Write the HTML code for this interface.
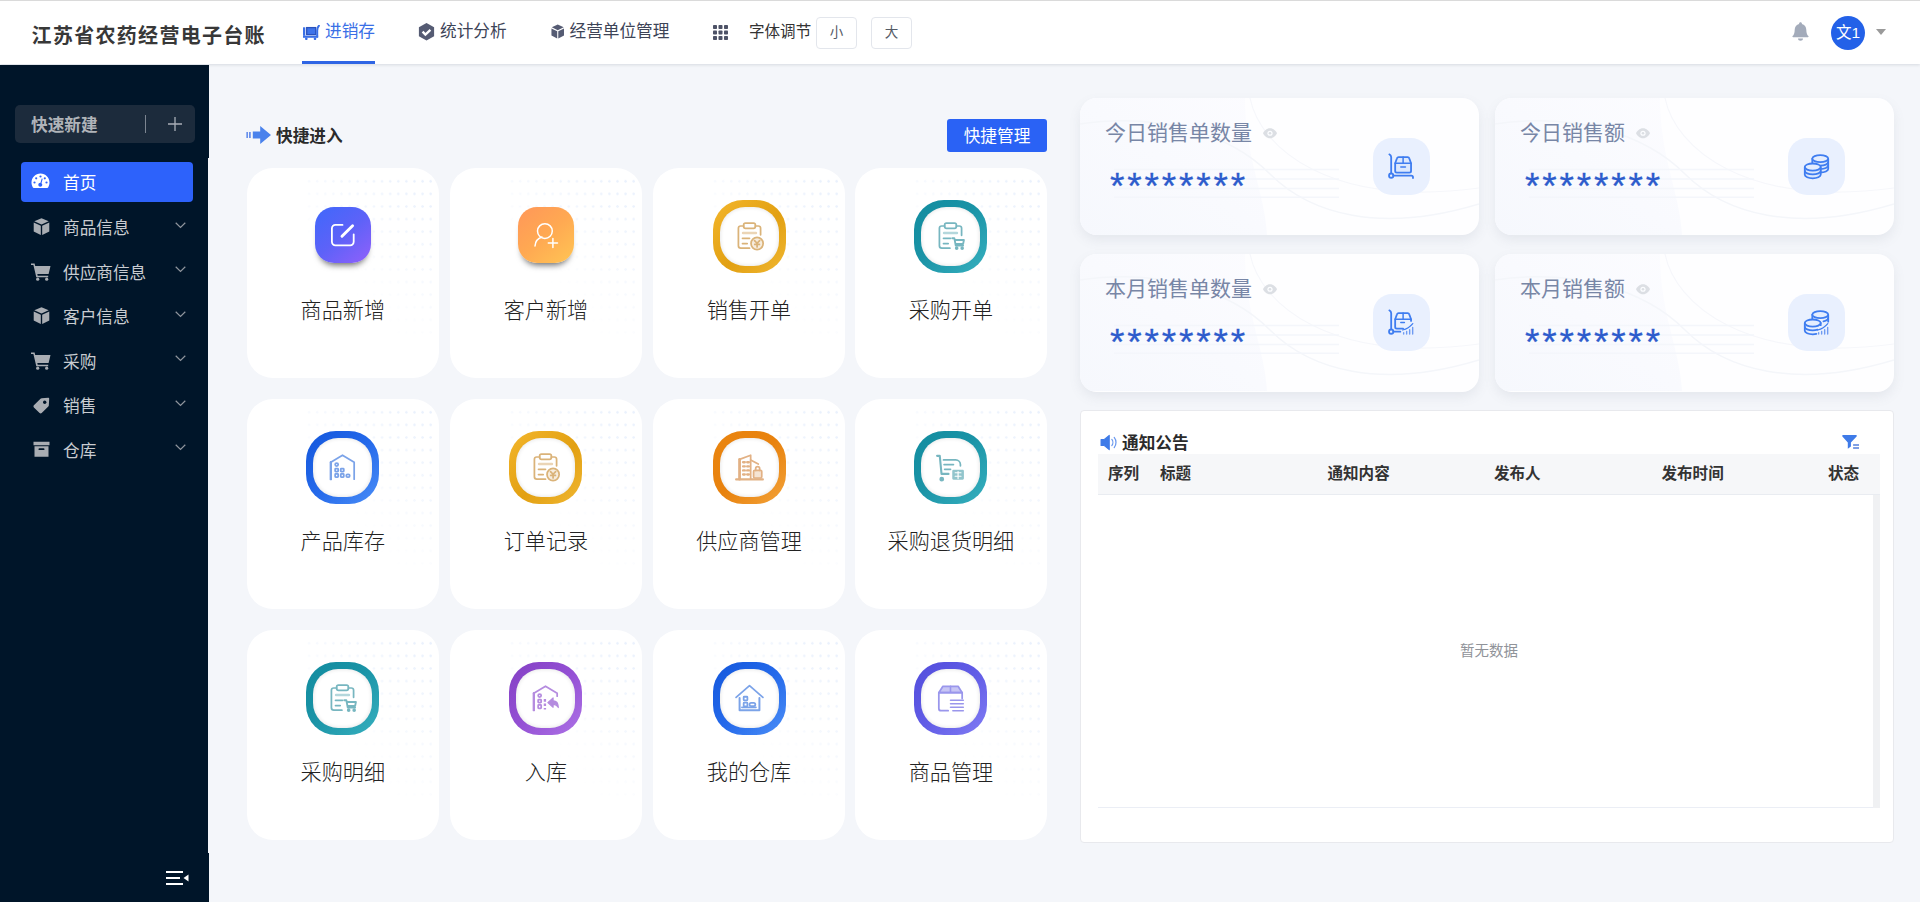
<!DOCTYPE html>
<html lang="zh-CN">
<head>
<meta charset="utf-8">
<title>江苏省农药经营电子台账</title>
<style>
*{box-sizing:border-box;margin:0;padding:0}
html,body{width:1920px;height:902px;overflow:hidden}
body{font-family:"Liberation Sans","Noto Sans CJK SC",sans-serif;background:#f4f6fa;color:#303133;position:relative}
.abs{position:absolute}
/* header */
#hd{position:absolute;left:0;top:0;width:1920px;height:64px;background:#fff;border-top:1px solid #dadada;box-shadow:0 1px 3px rgba(0,21,41,.12);z-index:5}
#logo{position:absolute;left:31.6px;top:19.8px;font-size:20px;line-height:30px;font-weight:700;letter-spacing:1.3px;color:#383838;white-space:nowrap}
.nav{position:absolute;top:0;height:64px;font-size:16.67px;line-height:24px;color:#3d4457;white-space:nowrap}
.nav span{position:absolute;top:18.7px}
.nav svg{position:absolute}
.nav.on{color:#3a6fe6}
#ul{position:absolute;left:302px;top:60px;width:73px;height:3px;background:#2f65e4}
.fbtn{position:absolute;top:16px;width:41px;height:32px;border:1px solid #e3e6ec;border-radius:4px;font-size:13.5px;line-height:30px;text-align:center;color:#555b66;background:#fff}
/* sidebar */
#sb{position:absolute;left:0;top:65px;width:208px;height:837px;background:#001529}
#qc{position:absolute;left:15px;top:40px;width:180px;height:38px;border-radius:5px;background:#1c2b3c}
#qc b{position:absolute;left:16px;top:8.5px;font-size:16.67px;line-height:24px;color:#b0b4b9;font-weight:700}
#qc i{position:absolute;left:130px;top:10px;width:1px;height:18px;background:#7c8591}
.mi{position:absolute;left:21px;width:172px;height:40px;border-radius:4px;color:#c9ccd1;font-size:16.67px;line-height:24px}
.mi span{position:absolute;left:42px;top:9.4px;white-space:nowrap}
.mi svg.ic{position:absolute;left:10px;top:11px}
.mi svg.ar{position:absolute;left:154px;top:14px}
.mi.on{background:#2d62fb;color:#fff}
.mi.on span{top:10.2px}
/* shortcut cards */
.card{position:absolute;width:192px;height:210px;border-radius:26px;background:#fff;overflow:hidden}
.card .dots{position:absolute;left:57.9px;top:6.6px;width:130px;height:164px;
 background-image:radial-gradient(circle,#dce8fb .9px,rgba(220,232,251,0) 1.5px);background-size:8.12px 12.6px;
 -webkit-mask-image:linear-gradient(225deg,rgba(0,0,0,.7) 0%,rgba(0,0,0,.4) 30%,rgba(0,0,0,.1) 55%,rgba(0,0,0,0) 70%);mask-image:linear-gradient(225deg,rgba(0,0,0,.7) 0%,rgba(0,0,0,.4) 30%,rgba(0,0,0,.1) 55%,rgba(0,0,0,0) 70%)}
.card .lb{position:absolute;left:0;width:192px;top:127.2px;text-align:center;font-size:21.1px;line-height:32px;color:#222;font-weight:300;white-space:nowrap}
.sq{position:absolute;left:68px;top:39px;width:56px;height:56px;border-radius:19px;box-shadow:0 6px 6px -4px rgba(0,0,0,.6)}
.ring{position:absolute;left:59.5px;top:32px;width:73px;height:73px;border-radius:30px}
.ring:before{content:"";position:absolute;left:7px;top:7px;right:7px;bottom:7px;border-radius:25px;background:#fff;box-shadow:inset 0 0 4px rgba(0,0,0,.13)}
.ring svg{position:absolute;left:19px;top:19px;width:35px;height:35px}
/* stat cards */
.st{position:absolute;width:399px;height:137px;border-radius:17px;background:#fefeff;overflow:hidden;box-shadow:0 5px 12px rgba(110,118,140,.11)}
.st .t{position:absolute;left:25px;top:18.7px;font-size:21px;line-height:32px;color:#7886a6;white-space:nowrap}
.st .v{position:absolute;left:30px;-webkit-text-stroke:.3px #2d5ccc;top:64.5px;font-size:37px;line-height:48px;color:#2d5ccc;letter-spacing:2.85px;white-space:nowrap;font-family:"Liberation Sans",sans-serif}
.st .ib{position:absolute;left:293px;top:40px;width:57px;height:57px;border-radius:19px;background:#e9f0fe}
.st .ib svg{position:absolute;left:14px;top:14px;width:29px;height:29px}
/* notice */
#nt{position:absolute;left:1080px;top:410px;width:814px;height:433px;background:#fff;border:1px solid #e8e9ed;border-radius:4px}
#th{position:absolute;left:17px;top:42.5px;width:782px;height:41.5px;background:#f6f7f9;border-bottom:1px solid #e9ecf1}
#th b{position:absolute;top:8.5px;font-size:15.55px;line-height:24px;color:#333;font-weight:700;white-space:nowrap}
</style>
</head>
<body>
<!-- HEADER -->
<div id="hd">
  <div id="logo">江苏省农药经营电子台账</div>
  <div class="nav on" style="left:302px;width:73px">
    <svg style="left:.8px;top:23.8px" width="17" height="15" viewBox="0 0 17 15"><path d="M0 2.300h2.300v8.500H0z" fill="#3a6fe6"/><rect x="3.700" y="2.600" width="9" height="7" fill="#3f74ea" stroke="#2a52bc" stroke-width="1.300"/><path d="M0 10.700h15.200v2.100H0z" fill="#3a6fe6"/><path d="M14.200 11.500V5.500c0-2 .5-3.500 1.700-4.700" fill="none" stroke="#3a6fe6" stroke-width="2" stroke-linecap="round"/><circle cx="3.300" cy="13.800" r="1.300" fill="#3a6fe6"/><circle cx="12" cy="13.800" r="1.300" fill="#3a6fe6"/></svg>
    <span style="left:23px">进销存</span>
  </div>
  <div id="ul"></div>
  <div class="nav" style="left:418px;width:90px">
    <svg style="left:0;top:22px" width="17" height="18" viewBox="0 0 17 18"><path d="M8.5 0l7.6 4.2v9.1L8.5 17.6.9 13.3V4.2z" fill="#555b73"/><path d="M4.6 8.6l2.8 3 5-4.8" fill="none" stroke="#fff" stroke-width="2.3"/></svg>
    <span style="left:22px">统计分析</span>
  </div>
  <div class="nav" style="left:550px;width:121px">
    <svg style="left:.8px;top:22.800px" width="13.500" height="15.200" viewBox="0 0 15 16"><path d="M7.5 0l6.6 3.3-6.6 3.3L.9 3.3z" fill="#555b73"/><path d="M.5 4.5l6.4 3.2v8L.5 12.4zM14.5 4.5L8.1 7.7v8l6.4-3.3z" fill="#555b73"/></svg>
    <span style="left:19.5px">经营单位管理</span>
  </div>
  <svg class="abs" style="left:713px;top:24px" width="15" height="15" viewBox="0 0 15 15" fill="#4d5266"><rect x="0" y="0" width="4" height="4" rx=".8"/><rect x="5.5" y="0" width="4" height="4" rx=".8"/><rect x="11" y="0" width="4" height="4" rx=".8"/><rect x="0" y="5.5" width="4" height="4" rx=".8"/><rect x="5.5" y="5.5" width="4" height="4" rx=".8"/><rect x="11" y="5.5" width="4" height="4" rx=".8"/><rect x="0" y="11" width="4" height="4" rx=".8"/><rect x="5.5" y="11" width="4" height="4" rx=".8"/><rect x="11" y="11" width="4" height="4" rx=".8"/></svg>
  <div class="abs" style="left:749px;top:19px;font-size:15.55px;line-height:24px;color:#333;white-space:nowrap">字体调节</div>
  <div class="fbtn" style="left:816px">小</div>
  <div class="fbtn" style="left:871px">大</div>
  <svg class="abs" style="left:1792px;top:21px" width="17" height="19" viewBox="0 0 17 19"><path d="M8.5 0.3c.8 0 1.4.6 1.4 1.3v.5c2.6.6 4.4 2.8 4.4 5.6 0 3.500.9 5.200 2.1 6.400.4.400.1 1.200-.6 1.200H1.200c-.7 0-1-.8-.6-1.200 1.200-1.200 2.100-2.900 2.100-6.400 0-2.800 1.800-5 4.400-5.600v-.5c0-.7.600-1.300 1.400-1.300z" fill="#a3abba"/><path d="M6 16.400h5c0 1.300-1.100 2.300-2.500 2.300S6 17.700 6 16.400z" fill="#a3abba"/></svg>
  <div class="abs" style="left:1831px;top:15px;width:34px;height:34px;border-radius:50%;background:#2361e8;color:#fff;font-size:15.5px;line-height:33px;text-align:center;white-space:nowrap">文1</div>
  <svg class="abs" style="left:1876px;top:28px" width="10" height="6" viewBox="0 0 10 6"><path d="M0 0h10L5 6z" fill="#9a9a9a"/></svg>
</div>

<!-- SIDEBAR -->
<div id="sb">
  <div class="abs" style="left:208px;top:0;width:1px;height:93px;background:#001529"></div><div class="abs" style="left:208px;top:788px;width:1px;height:49px;background:#001529"></div>
  <div id="qc"><b>快速新建</b><i></i>
    <svg class="abs" style="left:153px;top:12px" width="14" height="14" viewBox="0 0 14 14"><path d="M7 0v14M0 7h14" stroke="#a9afb7" stroke-width="1.3"/></svg>
  </div>
  <div class="mi on" style="top:97px"><svg class="ic" width="19" height="16" viewBox="0 0 19 16"><path d="M9.500.5C4.500.5.500 4.500.500 9.500c0 1.800.500 3.500 1.400 4.900.2.300.5.500.9.500h13.400c.4 0 .7-.2.900-.5.900-1.400 1.400-3.100 1.400-4.900 0-5-4-9-9-9z" fill="#fff"/><g fill="#2d62fb"><circle cx="9.500" cy="3.500" r="1.100"/><circle cx="5.200" cy="5.300" r="1.100"/><circle cx="3.500" cy="9.500" r="1.100"/><circle cx="15.500" cy="9.500" r="1.100"/><circle cx="13.800" cy="5.300" r="1.100"/><path d="M10.700 5.500l1 .3-1.200 4.400c.5.400.8 1 .8 1.600 0 1.100-.9 2-2 2s-2-.9-2-2 .9-2 2-2h.2z"/></g></svg><span>首页</span></div>
  <div class="mi" style="top:142.9px"><svg class="ic" style="left:11.5px;top:10px" width="17" height="17.500" viewBox="0 0 17 18"><path d="M8.500.2l7.400 3.200-7.400 3.300L1.100 3.400z" fill="#a9adb3"/><path d="M.500 4.700l7.300 3.200v9.600L.500 14zM16.500 4.700L9.200 7.900v9.600l7.300-3.500z" fill="#a9adb3"/></svg><span>商品信息</span><svg class="ar" width="11" height="7" viewBox="0 0 11 7"><path d="M.7.800l4.800 4.700L10.300.800" fill="none" stroke="#8f959d" stroke-width="1.200"/></svg></div>
  <div class="mi" style="top:187.4px"><svg class="ic" style="left:10px;top:11px" width="20" height="18" viewBox="0 0 20 18"><path d="M0 .5h3.600l.6 2.400h15.300l-1.900 8.100H6.300l.4 1.700h10.500v1.600H5.300L2.400 2.100H0z" fill="#a9adb3"/><circle cx="6.700" cy="16.200" r="1.600" fill="#a9adb3"/><circle cx="15.700" cy="16.200" r="1.600" fill="#a9adb3"/></svg><span>供应商信息</span><svg class="ar" width="11" height="7" viewBox="0 0 11 7"><path d="M.7.800l4.800 4.700L10.300.800" fill="none" stroke="#8f959d" stroke-width="1.200"/></svg></div>
  <div class="mi" style="top:231.9px"><svg class="ic" style="left:11.5px;top:10px" width="17" height="17.500" viewBox="0 0 17 18"><path d="M8.500.2l7.400 3.200-7.400 3.300L1.100 3.400z" fill="#a9adb3"/><path d="M.500 4.700l7.300 3.200v9.600L.500 14zM16.500 4.700L9.200 7.900v9.600l7.300-3.500z" fill="#a9adb3"/></svg><span>客户信息</span><svg class="ar" width="11" height="7" viewBox="0 0 11 7"><path d="M.7.800l4.800 4.700L10.300.800" fill="none" stroke="#8f959d" stroke-width="1.200"/></svg></div>
  <div class="mi" style="top:276.3px"><svg class="ic" style="left:10px;top:11px" width="20" height="18" viewBox="0 0 20 18"><path d="M0 .5h3.600l.6 2.400h15.300l-1.900 8.100H6.300l.4 1.700h10.500v1.600H5.300L2.400 2.100H0z" fill="#a9adb3"/><circle cx="6.700" cy="16.200" r="1.600" fill="#a9adb3"/><circle cx="15.700" cy="16.200" r="1.600" fill="#a9adb3"/></svg><span>采购</span><svg class="ar" width="11" height="7" viewBox="0 0 11 7"><path d="M.7.800l4.800 4.700L10.300.800" fill="none" stroke="#8f959d" stroke-width="1.200"/></svg></div>
  <div class="mi" style="top:320.7px"><svg class="ic" style="left:11px;top:11px" width="18" height="18" viewBox="0 0 18 18"><path d="M9.600 1.200l6.600-.4c.6 0 1 .4 1 1l-.4 6.600c0 .4-.2.800-.5 1.100l-6.600 6.600c-.6.600-1.500.6-2.100 0L1.900 10.400c-.6-.6-.6-1.500 0-2.100l6.600-6.600c.3-.3.700-.5 1.100-.5z" fill="#a9adb3"/><circle cx="12.700" cy="5.300" r="1.700" fill="#001529"/></svg><span>销售</span><svg class="ar" width="11" height="7" viewBox="0 0 11 7"><path d="M.7.800l4.800 4.700L10.300.800" fill="none" stroke="#8f959d" stroke-width="1.200"/></svg></div>
  <div class="mi" style="top:365.2px"><svg class="ic" style="left:11.500px;top:11px" width="17" height="16.500" viewBox="0 0 17 16"><path d="M.500.500h16v3.400H.500zM1.500 5h14v10.500h-14z" fill="#a9adb3"/><rect x="5.500" y="7" width="6" height="1.800" rx=".9" fill="#001529"/></svg><span>仓库</span><svg class="ar" width="11" height="7" viewBox="0 0 11 7"><path d="M.7.800l4.800 4.700L10.300.800" fill="none" stroke="#8f959d" stroke-width="1.200"/></svg></div>
  <svg class="abs" style="left:166px;top:806px" width="23" height="14" viewBox="0 0 23 14"><path d="M0 1h17M0 7h14M0 13h17" stroke="#fff" stroke-width="1.800"/><path d="M22.500 3.500v7L17.500 7z" fill="#fff"/></svg>
</div>

<!--MAIN-->
<svg class="abs" style="left:246px;top:126px" width="26" height="18" viewBox="0 0 26 18"><rect x=".400" y="6" width="1.500" height="6" fill="#5a86ea"/><rect x="3.100" y="6" width="1.600" height="6" fill="#5a86ea"/><path d="M6.800 5.400h7.400V0L25 9l-10.800 9v-5.400H6.800z" fill="#4a82ec"/></svg>
<div class="abs" style="left:276px;top:124.500px;font-size:16.67px;line-height:24px;font-weight:700;color:#2b2b2b;white-space:nowrap">快捷进入</div>
<div class="abs" style="left:947px;top:119px;width:100px;height:33px;border-radius:3px;background:#2a62f5;color:#fff;font-size:16.67px;line-height:36.8px;text-align:center;white-space:nowrap">快捷管理</div>
<div class="card" style="left:246.8px;top:168px"><div class="dots"></div><div class="sq" style="background:linear-gradient(140deg,#3f68fb 0%,#5d62f8 50%,#9160fb 100%)"><svg class="abs" style="left:16px;top:14px" width="26" height="26" viewBox="0 0 26 26" fill="none" stroke="#fff" stroke-width="1.800" stroke-linecap="round" stroke-linejoin="round"><path d="M11.500 3.900H4.400a3.500 3.500 0 0 0-3.500 3.500v13.400a3.500 3.500 0 0 0 3.500 3.500h14.800a3.500 3.500 0 0 0 3.500-3.500v-7.500"/><path d="M11 15.300L21.600 4.700" stroke-width="2.900"/></svg></div><div class="lb">商品新增</div></div>
<div class="card" style="left:449.9px;top:168px"><div class="dots"></div><div class="sq" style="background:linear-gradient(140deg,#ff9759 0%,#ffa952 50%,#ffc554 100%)"><svg class="abs" style="left:14px;top:14px" width="28" height="28" viewBox="0 0 28 28" fill="none" stroke="#fff" stroke-width="1.500" stroke-linecap="round" stroke-linejoin="round"><circle cx="12.900" cy="10.100" r="7.400"/><path d="M3 25c.3-4.500 3-7.800 7-9"/><path d="M16.300 22h9.200M20.900 17.600v8.800"/></svg></div><div class="lb">客户新增</div></div>
<div class="card" style="left:653px;top:168px"><div class="dots"></div><div class="ring" style="background:linear-gradient(135deg,#f3b62c 0%,#e2a012 55%,#f0b732 100%)"><svg viewBox="0 0 30 30" fill="none" stroke="#d3a35c" stroke-width="1.5" stroke-linecap="round" stroke-linejoin="round" opacity=".82"><path d="M10 6H7.500a2 2 0 0 0-2 2v15a2 2 0 0 0 2 2h7.500"/><path d="M20 6h2.500a2 2 0 0 1 2 2v5.500"/><rect x="10" y="3.500" width="10" height="4.500" rx="1.500"/><path d="M9.500 12h11" stroke-width="2.200" opacity=".55"/><path d="M9 16.500h6M9 21h4"/><circle cx="21.500" cy="21" r="5.200" fill="#d3a35c" fill-opacity=".25"/><path d="M19.300 18.500l2.200 2.300 2.200-2.300M21.500 20.800v3.200M19.500 21.800h4"/></svg></div><div class="lb">销售开单</div></div>
<div class="card" style="left:854.9px;top:168px"><div class="dots"></div><div class="ring" style="background:linear-gradient(135deg,#128c9f 0%,#1a93a6 45%,#37b0bf 100%)"><svg viewBox="0 0 30 30" fill="none" stroke="#5aa7b3" stroke-width="1.5" stroke-linecap="round" stroke-linejoin="round" opacity=".82"><path d="M10 6H7.500a2 2 0 0 0-2 2v15a2 2 0 0 0 2 2h7"/><path d="M20 6h2.500a2 2 0 0 1 2 2v6"/><rect x="10" y="3.500" width="10" height="4.500" rx="1.500"/><path d="M9.500 12h11" stroke-width="2.200" opacity=".55"/><path d="M9 16.500h6M9 21h4"/><path d="M16.500 16.500h1.800l1.200 6.300h6.300M19 18h7.500l-.7 3.400h-6.200" stroke-width="1.600"/><circle cx="20.300" cy="25" r=".8" fill="#5aa7b3"/><circle cx="25" cy="25" r=".8" fill="#5aa7b3"/></svg></div><div class="lb">采购开单</div></div>
<div class="card" style="left:246.8px;top:399px"><div class="dots"></div><div class="ring" style="background:linear-gradient(135deg,#1457dc 0%,#2469ea 50%,#4b8ef7 100%)"><svg viewBox="0 0 30 30" fill="none" stroke="#5f8fe4" stroke-width="1.5" stroke-linecap="round" stroke-linejoin="round" opacity=".82"><path d="M5 25V10.500L15 4.500l10 6V25"/><path d="M5 10.500V25" stroke-width="2"/><circle cx="10" cy="12.500" r="1.300"/><rect x="8.700" y="16" width="2.600" height="2.600" rx=".5"/><rect x="8.700" y="20.500" width="2.600" height="2.800" rx=".5"/><rect x="13.500" y="16" width="2.600" height="2.600" rx=".5"/><rect x="13.500" y="20.500" width="2.600" height="2.800" rx=".5"/><rect x="18.200" y="20.800" width="3" height="2.400" rx="1.200"/></svg></div><div class="lb">产品库存</div></div>
<div class="card" style="left:449.9px;top:399px"><div class="dots"></div><div class="ring" style="background:linear-gradient(135deg,#f3b62c 0%,#e2a012 55%,#f0b732 100%)"><svg viewBox="0 0 30 30" fill="none" stroke="#d3a35c" stroke-width="1.5" stroke-linecap="round" stroke-linejoin="round" opacity=".82"><path d="M10 6H7.500a2 2 0 0 0-2 2v15a2 2 0 0 0 2 2h7.500"/><path d="M20 6h2.500a2 2 0 0 1 2 2v5.500"/><rect x="10" y="3.500" width="10" height="4.500" rx="1.500"/><path d="M9.500 12h11" stroke-width="2.200" opacity=".55"/><path d="M9 16.500h6M9 21h4"/><circle cx="21.500" cy="21" r="5.200" fill="#d3a35c" fill-opacity=".25"/><path d="M19.300 18.500l2.200 2.300 2.200-2.300M21.500 20.800v3.200M19.500 21.800h4"/></svg></div><div class="lb">订单记录</div></div>
<div class="card" style="left:653px;top:399px"><div class="dots"></div><div class="ring" style="background:linear-gradient(135deg,#ea850f 0%,#e8820e 50%,#f3a33a 100%)"><svg viewBox="0 0 30 30" fill="none" stroke="#dca06a" stroke-width="1.5" stroke-linecap="round" stroke-linejoin="round" opacity=".82"><path d="M6.500 25V8l9.500-3.500V25"/><path d="M6.500 8V25" stroke-width="2.300"/><path d="M16 8.500l6.500 3.500"/><path d="M3.500 25.200h23" stroke-width="1.800"/><path d="M9.500 10.500h1.500M13 10.500h1.500M9.500 14h1.500M13 14h1.500M9.500 17.500h1.500M13 17.500h1.500M9.500 21h1.500M13 21h1.500" stroke-width="2"/><rect x="18.500" y="17.500" width="7" height="6.500" rx="1" fill="#dca06a" fill-opacity=".35"/><path d="M20.300 17.500v-1.600a1.700 1.700 0 0 1 3.400 0v1.600"/></svg></div><div class="lb">供应商管理</div></div>
<div class="card" style="left:854.9px;top:399px"><div class="dots"></div><div class="ring" style="background:linear-gradient(135deg,#128c9f 0%,#1a93a6 45%,#37b0bf 100%)"><svg viewBox="0 0 30 30" fill="none" stroke="#5aa7b3" stroke-width="1.5" stroke-linecap="round" stroke-linejoin="round" opacity=".82"><path d="M3.500 5h2.300l1.500 15.500h6" stroke-width="1.800"/><path d="M9 8.500h10.500a4 4 0 0 1 4 4v1"/><path d="M9.500 12.500h8M10 16.500h5"/><circle cx="7.500" cy="25" r="1.300" fill="#5aa7b3"/><rect x="16.500" y="17" width="10" height="8.500" rx="1" fill="#5aa7b3" fill-opacity=".8" stroke="none"/><path d="M19 19.500h5M19 22.500h5M21.500 18.500v6" stroke="#fff" stroke-width="1"/></svg></div><div class="lb">采购退货明细</div></div>
<div class="card" style="left:246.8px;top:630px"><div class="dots"></div><div class="ring" style="background:linear-gradient(135deg,#128c9f 0%,#1a93a6 45%,#37b0bf 100%)"><svg viewBox="0 0 30 30" fill="none" stroke="#5aa7b3" stroke-width="1.5" stroke-linecap="round" stroke-linejoin="round" opacity=".82"><path d="M10 6H7.500a2 2 0 0 0-2 2v15a2 2 0 0 0 2 2h7"/><path d="M20 6h2.500a2 2 0 0 1 2 2v6"/><rect x="10" y="3.500" width="10" height="4.500" rx="1.500"/><path d="M9.500 12h11" stroke-width="2.200" opacity=".55"/><path d="M9 16.500h6M9 21h4"/><path d="M16.500 16.500h1.800l1.200 6.300h6.300M19 18h7.500l-.7 3.400h-6.200" stroke-width="1.600"/><circle cx="20.300" cy="25" r=".8" fill="#5aa7b3"/><circle cx="25" cy="25" r=".8" fill="#5aa7b3"/></svg></div><div class="lb">采购明细</div></div>
<div class="card" style="left:449.9px;top:630px"><div class="dots"></div><div class="ring" style="background:linear-gradient(135deg,#8440c4 0%,#9450d4 50%,#ad72e6 100%)"><svg viewBox="0 0 30 30" fill="none" stroke="#a573d8" stroke-width="1.5" stroke-linecap="round" stroke-linejoin="round" opacity=".82"><path d="M5 25V10.500L15 4.500l10 6v2.500"/><path d="M5 10.500V25" stroke-width="2"/><circle cx="10" cy="12.500" r="1.300"/><rect x="8.700" y="16" width="2.600" height="2.600" rx=".5"/><rect x="8.700" y="20.500" width="2.600" height="3" rx=".5"/><path d="M14.500 15.500v9" stroke-width="2" stroke-dasharray="2.2 1.6" stroke-linecap="butt"/><path d="M21.500 14.500l-4.500 4 4.500 4v-2.500c2 0 3.500.8 4.500 2.800 0-3.500-1.500-5.800-4.500-5.800z" fill="#a573d8" stroke-width="1"/></svg></div><div class="lb">入库</div></div>
<div class="card" style="left:653px;top:630px"><div class="dots"></div><div class="ring" style="background:linear-gradient(135deg,#1457dc 0%,#2469ea 50%,#4b8ef7 100%)"><svg viewBox="0 0 30 30" fill="none" stroke="#5f8fe4" stroke-width="1.5" stroke-linecap="round" stroke-linejoin="round" opacity=".82"><path d="M3.500 14L15 4l11.500 10"/><path d="M6.500 14.500V25h17V14.500" stroke-width="1.700"/><rect x="10" y="13.500" width="3.200" height="3" rx=".5"/><rect x="10" y="18.500" width="3.200" height="3.200" rx=".5"/><rect x="15" y="18.800" width="5" height="2.800" rx="1.400"/><path d="M8.500 22.500h12"/></svg></div><div class="lb">我的仓库</div></div>
<div class="card" style="left:854.9px;top:630px"><div class="dots"></div><div class="ring" style="background:linear-gradient(135deg,#524ddc 0%,#615ce6 50%,#817cf4 100%)"><svg viewBox="0 0 30 30" fill="none" stroke="#8480e8" stroke-width="1.5" stroke-linecap="round" stroke-linejoin="round" opacity=".82"><path d="M8.500 4.500h13l3.500 5.500H5z" fill="#8480e8" fill-opacity=".55"/><path d="M5 10v13.500a2 2 0 0 0 2 2h6"/><path d="M25 10v5"/><path d="M15 4.500V10M5 10h20" stroke-width="1.400"/><path d="M15 16.500h11M15 19.500h11M15 22.500h11M17 25.500h9" stroke-width="1.300"/></svg></div><div class="lb">商品管理</div></div>
<div class="st" style="left:1080px;top:98.3px;height:136.8px"><svg class="abs" style="left:0;top:0" width="399" height="137" viewBox="0 0 399 137" fill="none"><defs><linearGradient id="lg" x1="1" y1="0" x2="0" y2="1"><stop offset="0" stop-color="#fcfcff"/><stop offset="1" stop-color="#f6f8fd"/></linearGradient></defs><path d="M0 0h165c0 60 20 95 22 137H0z" fill="url(#lg)"/><path d="M0 26c80-12 150 10 190 50s110 60 209 30" stroke="#f4f6fa" stroke-width="1.500"/><path d="M170 0c10 50 80 110 229 90" stroke="#f6f7fb" stroke-width="1.200"/><path d="M34 71.600h225M34 81h225M34 90.400h225M34 99.200h225" stroke="#f4f6fb" stroke-width="1.500"/></svg><div class="t">今日销售单数量</div><svg class="abs" style="left:183px;top:30px" width="14" height="10.500" viewBox="0 0 14 10"><path d="M7 0C3.500 0 1 2.700 0 5c1 2.300 3.500 5 7 5s6-2.700 7-5c-1-2.300-3.500-5-7-5z" fill="#dcdfe4"/><circle cx="7" cy="5" r="2.600" fill="#fcfdff"/><circle cx="7" cy="5" r="1.300" fill="#dcdfe4"/></svg><div class="v">********</div><div class="ib"><svg viewBox="0 0 27 27" fill="none" stroke="#3f7df0" stroke-width="1.700" stroke-linecap="round" stroke-linejoin="round"><path d="M2.200 2.200c1.200.5 1.700 1.300 1.700 2.600V20"/><circle cx="3.900" cy="22" r="2" fill="#e9f0fe"/><path d="M5.900 22h16.800c1 0 1.500.6 1.500 1.500v.8"/><path d="M7.600 10.500l1.700-4.700a1.600 1.600 0 0 1 1.500-1.100h8.400a1.600 1.600 0 0 1 1.500 1.100l1.700 4.700v7.200a1.500 1.500 0 0 1-1.500 1.500H9.100a1.500 1.500 0 0 1-1.500-1.500z" fill="#dce8fd"/><path d="M7.600 10.500h14.800M15 4.700v5.800" stroke-width="1.400"/><path d="M12.800 14h4.400" stroke-width="1.300"/></svg></div></div>
<div class="st" style="left:1495px;top:98.3px;height:136.8px"><svg class="abs" style="left:0;top:0" width="399" height="137" viewBox="0 0 399 137" fill="none"><defs><linearGradient id="lg" x1="1" y1="0" x2="0" y2="1"><stop offset="0" stop-color="#fcfcff"/><stop offset="1" stop-color="#f6f8fd"/></linearGradient></defs><path d="M0 0h165c0 60 20 95 22 137H0z" fill="url(#lg)"/><path d="M0 26c80-12 150 10 190 50s110 60 209 30" stroke="#f4f6fa" stroke-width="1.500"/><path d="M170 0c10 50 80 110 229 90" stroke="#f6f7fb" stroke-width="1.200"/><path d="M34 71.600h225M34 81h225M34 90.400h225M34 99.200h225" stroke="#f4f6fb" stroke-width="1.500"/></svg><div class="t">今日销售额</div><svg class="abs" style="left:141px;top:30px" width="14" height="10.500" viewBox="0 0 14 10"><path d="M7 0C3.500 0 1 2.700 0 5c1 2.300 3.500 5 7 5s6-2.700 7-5c-1-2.300-3.500-5-7-5z" fill="#dcdfe4"/><circle cx="7" cy="5" r="2.600" fill="#fcfdff"/><circle cx="7" cy="5" r="1.300" fill="#dcdfe4"/></svg><div class="v">********</div><div class="ib"><svg viewBox="0 0 27 27" fill="none" stroke="#3f7df0" stroke-width="1.700" stroke-linecap="round" stroke-linejoin="round"><path d="M9.600 6.200v9.600c0 1.800 3.300 3.300 7.400 3.300s7.400-1.500 7.400-3.300V6.200" fill="#dce8fd"/><path d="M24.400 9.400c0 1.800-3.300 3.300-7.400 3.300M24.400 12.600c0 1.800-3.300 3.300-7.400 3.300"/><ellipse cx="17" cy="6.200" rx="7.400" ry="3.300" fill="#e4edfe"/><path d="M2.600 14v7.200c0 1.800 3.300 3.300 7.400 3.300s7.400-1.500 7.400-3.300V14" fill="#dce8fd"/><path d="M2.600 17.600c0 1.800 3.300 3.300 7.400 3.300s7.400-1.500 7.400-3.300"/><ellipse cx="10" cy="14" rx="7.400" ry="3.300" fill="#e4edfe"/></svg></div></div>
<div class="st" style="left:1080px;top:254.3px;height:137.5px"><svg class="abs" style="left:0;top:0" width="399" height="137" viewBox="0 0 399 137" fill="none"><defs><linearGradient id="lg" x1="1" y1="0" x2="0" y2="1"><stop offset="0" stop-color="#fcfcff"/><stop offset="1" stop-color="#f6f8fd"/></linearGradient></defs><path d="M0 0h165c0 60 20 95 22 137H0z" fill="url(#lg)"/><path d="M0 26c80-12 150 10 190 50s110 60 209 30" stroke="#f4f6fa" stroke-width="1.500"/><path d="M170 0c10 50 80 110 229 90" stroke="#f6f7fb" stroke-width="1.200"/><path d="M34 71.600h225M34 81h225M34 90.400h225M34 99.200h225" stroke="#f4f6fb" stroke-width="1.500"/></svg><div class="t">本月销售单数量</div><svg class="abs" style="left:183px;top:30px" width="14" height="10.500" viewBox="0 0 14 10"><path d="M7 0C3.500 0 1 2.700 0 5c1 2.300 3.500 5 7 5s6-2.700 7-5c-1-2.300-3.500-5-7-5z" fill="#dcdfe4"/><circle cx="7" cy="5" r="2.600" fill="#fcfdff"/><circle cx="7" cy="5" r="1.300" fill="#dcdfe4"/></svg><div class="v">********</div><div class="ib"><svg viewBox="0 0 27 27" fill="none" stroke="#3f7df0" stroke-width="1.700" stroke-linecap="round" stroke-linejoin="round"><path d="M2.200 2.200c1.200.5 1.700 1.300 1.700 2.600V20"/><circle cx="3.900" cy="22" r="2" fill="#e9f0fe"/><path d="M5.900 22h6.500"/><path d="M15 19.200H9.100a1.500 1.500 0 0 1-1.500-1.500v-7.200l1.700-4.700a1.600 1.600 0 0 1 1.500-1.100h8.400a1.600 1.600 0 0 1 1.500 1.100l1.700 4.700v1.500"/><path d="M7.600 10.500h14.800M15 4.700v5.800" stroke-width="1.400"/><path d="M12.800 13.500h3.400" stroke-width="1.300"/><path d="M14.500 20.500c4-1 7-3 9.500-6" stroke-width="1.100"/><path d="M15.500 24.300v-1.300M18.300 24.300v-2.500M21.100 24.300v-4M23.900 24.300v-6.300" stroke-width="1.300" stroke="#6f9bf2"/></svg></div></div>
<div class="st" style="left:1495px;top:254.3px;height:137.5px"><svg class="abs" style="left:0;top:0" width="399" height="137" viewBox="0 0 399 137" fill="none"><defs><linearGradient id="lg" x1="1" y1="0" x2="0" y2="1"><stop offset="0" stop-color="#fcfcff"/><stop offset="1" stop-color="#f6f8fd"/></linearGradient></defs><path d="M0 0h165c0 60 20 95 22 137H0z" fill="url(#lg)"/><path d="M0 26c80-12 150 10 190 50s110 60 209 30" stroke="#f4f6fa" stroke-width="1.500"/><path d="M170 0c10 50 80 110 229 90" stroke="#f6f7fb" stroke-width="1.200"/><path d="M34 71.600h225M34 81h225M34 90.400h225M34 99.200h225" stroke="#f4f6fb" stroke-width="1.500"/></svg><div class="t">本月销售额</div><svg class="abs" style="left:141px;top:30px" width="14" height="10.500" viewBox="0 0 14 10"><path d="M7 0C3.500 0 1 2.700 0 5c1 2.300 3.500 5 7 5s6-2.700 7-5c-1-2.300-3.500-5-7-5z" fill="#dcdfe4"/><circle cx="7" cy="5" r="2.600" fill="#fcfdff"/><circle cx="7" cy="5" r="1.300" fill="#dcdfe4"/></svg><div class="v">********</div><div class="ib"><svg viewBox="0 0 27 27" fill="none" stroke="#3f7df0" stroke-width="1.700" stroke-linecap="round" stroke-linejoin="round"><path d="M9.600 6.200v6M24.400 6.200v6.500"/><path d="M24.400 9.400c0 1.400-1.800 2.500-4.400 3"/><ellipse cx="17" cy="6.200" rx="7.400" ry="3.300" fill="#e4edfe"/><path d="M2.600 14v7.200c0 1.800 3.300 3.300 7.400 3.300 1.200 0 2.400-.1 3.400-.4M17.400 14v2" /><path d="M2.600 17.600c0 1.800 3.300 3.300 7.400 3.300 1.700 0 3.300-.3 4.500-.7"/><ellipse cx="10" cy="14" rx="7.400" ry="3.300" fill="#e4edfe"/><path d="M14.500 20.500c4-1 7-3 9.500-6" stroke-width="1.100"/><path d="M15.500 24.300v-1.300M18.300 24.300v-2.500M21.100 24.300v-4M23.900 24.300v-6.300" stroke-width="1.300" stroke="#6f9bf2"/></svg></div></div>
<div id="nt">
<svg class="abs" style="left:18.500px;top:22.500px" width="17.500" height="17" viewBox="0 0 17 16"><path d="M1 5h3.200L9 1v14L4.200 11H1z" fill="#3f7be8" stroke="#3f7be8" stroke-linejoin="round"/><path d="M11.500 5c1.300 1.600 1.300 4.400 0 6M13.800 3c2.300 2.800 2.300 7.200 0 10" fill="none" stroke="#6a98ee" stroke-width="1.200" stroke-linecap="round"/></svg>
<div class="abs" style="left:41px;top:20.500px;font-size:16.67px;line-height:24px;font-weight:700;color:#2b2b2b;white-space:nowrap">通知公告</div>
<svg class="abs" style="left:761px;top:24px" width="18" height="14" viewBox="0 0 18 14"><path d="M1.200 0h12.800q1.300.2.600 1.500L8.900 7.600v3.800L5.800 13.700V7.600L.400 1.500Q-.300.200 1.200 0z" fill="#3f7be8"/><path d="M11.100 10h5.900M11.100 12.900h5.900" stroke="#5580dc" stroke-width="1.500"/></svg>
<div id="th"><b style="left:10px">序列</b><b style="left:62px">标题</b><b style="left:229.500px">通知内容</b><b style="left:396px">发布人</b><b style="left:563.500px">发布时间</b><b style="left:730px">状态</b></div>
<div class="abs" style="left:17px;top:84px;width:782px;height:313px;border-bottom:1px solid #ebeef5"></div>
<div class="abs" style="left:792px;top:84px;width:7px;height:313px;background:#f0f1f3"></div>
<div class="abs" style="left:17px;top:228px;width:782px;text-align:center;font-size:14.500px;line-height:24px;color:#909399;white-space:nowrap">暂无数据</div>
</div>
</body>
</html>
